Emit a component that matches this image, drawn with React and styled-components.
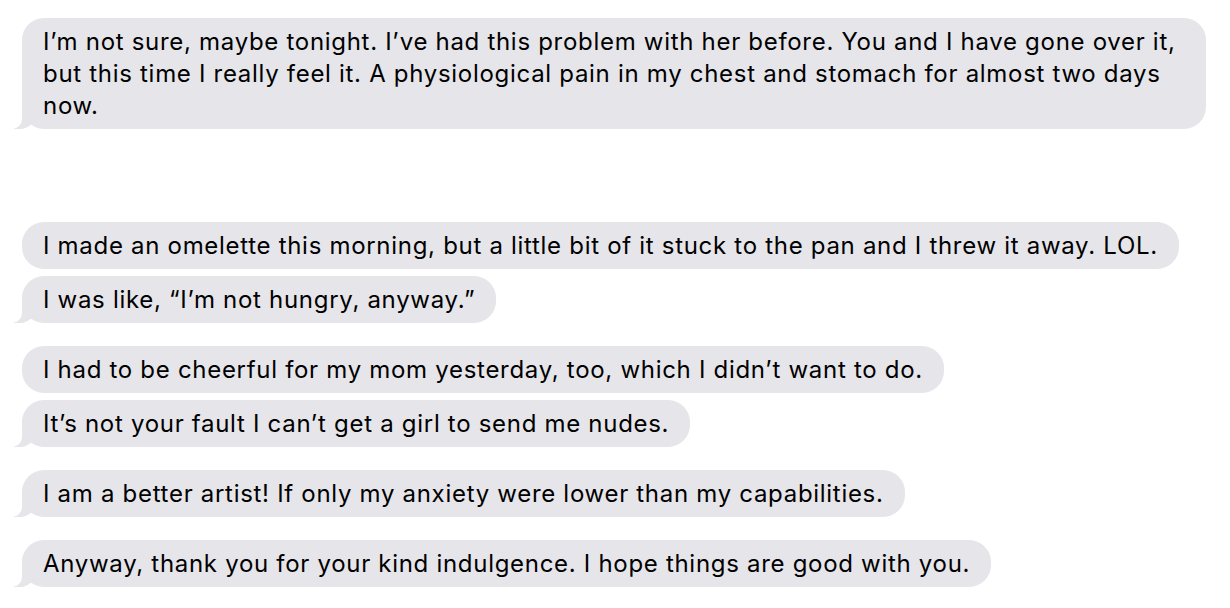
import styled, { createGlobalStyle, css } from "styled-components";

const GlobalStyle = createGlobalStyle`
  html, body {
    margin: 0;
    padding: 0;
    background: #ffffff;
  }
`;

const BUBBLE_GREY = "#e5e5ea";

const messages = [
  {
    text: "I’m not sure, maybe tonight. I’ve had this problem with her before. You and I have gone over it, but this time I really feel it. A physiological pain in my chest and stomach for almost two days now.",
    tail: true,
    gap: 0,
  },
  {
    text: "I made an omelette this morning, but a little bit of it stuck to the pan and I threw it away. LOL.",
    tail: false,
    gap: 93,
  },
  { text: "I was like, “I’m not hungry, anyway.”", tail: true, gap: 7 },
  {
    text: "I had to be cheerful for my mom yesterday, too, which I didn’t want to do.",
    tail: false,
    gap: 23,
  },
  { text: "It’s not your fault I can’t get a girl to send me nudes.", tail: true, gap: 7 },
  {
    text: "I am a better artist! If only my anxiety were lower than my capabilities.",
    tail: true,
    gap: 23,
  },
  {
    text: "Anyway, thank you for your kind indulgence. I hope things are good with you.",
    tail: true,
    gap: 23,
  },
];

const Thread = styled.div`
  display: flex;
  flex-direction: column;
  align-items: flex-start;
  padding: 18px 0 0 22px;
  width: 1230px;
  height: 608px;
  box-sizing: border-box;
  overflow: hidden;
`;

const tailStyles = css`
  &::before {
    content: "";
    position: absolute;
    left: -8px;
    bottom: 0;
    width: 22px;
    height: 22px;
    background: ${BUBBLE_GREY};
    border-bottom-right-radius: 16px;
  }

  &::after {
    content: "";
    position: absolute;
    left: -10px;
    bottom: 0;
    width: 10px;
    height: 22px;
    background: #ffffff;
    border-bottom-right-radius: 10px;
  }
`;

const Bubble = styled.div`
  position: relative;
  margin-top: ${(p) => p.$gap}px;
  max-width: 1142px;
  padding: 8px 21px 7px;
  border-radius: 22px;
  background: ${BUBBLE_GREY};
  color: #000000;
  font-family: Inter, "Liberation Sans", Arial, sans-serif;
  font-size: 24px;
  line-height: 32px;
  letter-spacing: 0.7px;
  ${(p) => p.$tail && tailStyles}
`;

export default function App() {
  return (
    <>
      <GlobalStyle />
      <Thread>
        {messages.map((m, i) => (
          <Bubble key={i} $tail={m.tail} $gap={m.gap}>
            {m.text}
          </Bubble>
        ))}
      </Thread>
    </>
  );
}
